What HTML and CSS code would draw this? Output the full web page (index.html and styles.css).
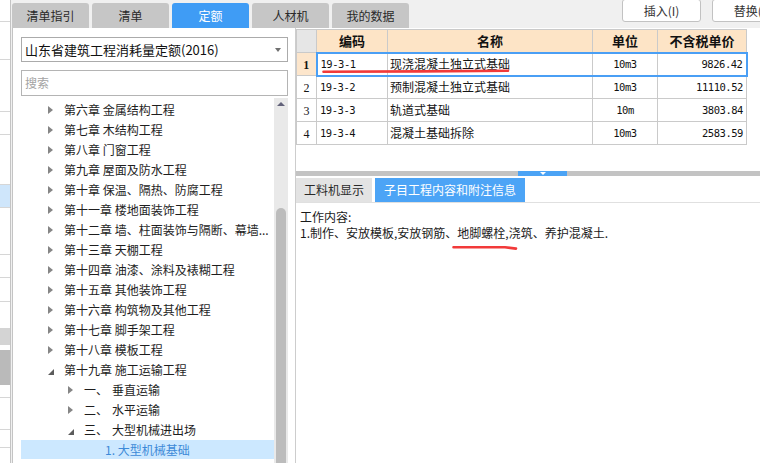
FILE: index.html
```html
<!DOCTYPE html>
<html lang="zh-CN">
<head>
<meta charset="utf-8">
<title>定额</title>
<link rel="stylesheet" href="styles.css">
</head>
<body>
<div class="app">
  <div class="strip">
    <div class="s-row r22"></div>
    <div class="s-row r38"></div>
    <div class="s-row r52"></div>
    <div class="s-row r23"></div>
    <div class="s-row r50"></div>
    <div class="s-row r23 s-sel"></div>
    <div class="s-row r47"></div>
    <div class="s-row r23"></div>
    <div class="s-row r24"></div>
    <div class="s-row r26 nob"></div>
    <div class="s-row r17 s-g1 nob"></div>
    <div class="s-row r5 nob"></div>
    <div class="s-row r35 s-g2 nob"></div>
    <div class="s-row r13"></div>
    <div class="s-row r32"></div>
    <div class="s-row r18"></div>
    <div class="s-row r15 nob"></div>
  </div>
  <div class="main">
    <div class="topbar">
      <div class="tabs">
        <div class="tab">清单指引</div>
        <div class="tab">清单</div>
        <div class="tab active">定额</div>
        <div class="tab">人材机</div>
        <div class="tab">我的数据</div>
      </div>
      <div class="btns">
        <div class="btn">插入(I)</div>
        <div class="btn">替换(I)</div>
      </div>
    </div>
    <div class="content">
      <div class="lpane">
        <div class="select"><span>山东省建筑工程消耗量定额(2016)</span><span class="caret"></span></div>
        <div class="search">搜索</div>
        <div class="treewrap">
          <ul class="tree">
            <li class="node"><span class="arr"></span>第六章 金属结构工程</li>
            <li class="node"><span class="arr"></span>第七章 木结构工程</li>
            <li class="node"><span class="arr"></span>第八章 门窗工程</li>
            <li class="node"><span class="arr"></span>第九章 屋面及防水工程</li>
            <li class="node"><span class="arr"></span>第十章 保温、隔热、防腐工程</li>
            <li class="node"><span class="arr"></span>第十一章 楼地面装饰工程</li>
            <li class="node"><span class="arr"></span>第十二章 墙、柱面装饰与隔断、幕墙...</li>
            <li class="node"><span class="arr"></span>第十三章 天棚工程</li>
            <li class="node"><span class="arr"></span>第十四章 油漆、涂料及裱糊工程</li>
            <li class="node"><span class="arr"></span>第十五章 其他装饰工程</li>
            <li class="node"><span class="arr"></span>第十六章 构筑物及其他工程</li>
            <li class="node"><span class="arr"></span>第十七章 脚手架工程</li>
            <li class="node"><span class="arr"></span>第十八章 模板工程</li>
            <li class="node"><span class="arr open"></span>第十九章 施工运输工程</li>
            <li class="node sub"><span class="arr"></span>一、<span class="gap">垂直运输</span></li>
            <li class="node sub"><span class="arr"></span>二、<span class="gap">水平运输</span></li>
            <li class="node sub"><span class="arr open"></span>三、<span class="gap">大型机械进出场</span></li>
            <li class="node leaf selected">1. 大型机械基础</li>
          </ul>
          <div class="vscroll"><span class="up"></span><div class="thumb"></div></div>
        </div>
      </div>
      <div class="rpane">
        <div class="gridarea">
          <table class="grid">
            <thead>
              <tr><th class="corner"></th><th class="c-code">编码</th><th class="c-name">名称</th><th class="c-unit">单位</th><th class="c-price">不含税单价</th></tr>
            </thead>
            <tbody>
              <tr class="sel"><td class="num cur">1</td><td class="code">19-3-1</td><td class="name">现浇混凝土独立式基础</td><td class="unit">10m3</td><td class="price">9826.42</td></tr>
              <tr><td class="num">2</td><td class="code">19-3-2</td><td class="name">预制混凝土独立式基础</td><td class="unit">10m3</td><td class="price">11110.52</td></tr>
              <tr><td class="num">3</td><td class="code">19-3-3</td><td class="name">轨道式基础</td><td class="unit">10m</td><td class="price">3803.84</td></tr>
              <tr><td class="num">4</td><td class="code">19-3-4</td><td class="name">混凝土基础拆除</td><td class="unit">10m3</td><td class="price">2583.59</td></tr>
            </tbody>
          </table>
        </div>
        <div class="splitter"><span class="grip"><span class="down"></span></span></div>
        <div class="btabs">
          <div class="btab">工料机显示</div>
          <div class="btab active">子目工程内容和附注信息</div>
        </div>
        <div class="detail">
          <p>工作内容:</p>
          <p>1.制作、安放模板,安放钢筋、地脚螺栓,浇筑、养护混凝土.</p>
        </div>
      </div>
    </div>
  </div>
</div>
<svg class="marks" width="760" height="463" viewBox="0 0 760 463">
  <path d="M323.5 71.8 C 380 71.6, 450 71.2, 508 70.8" fill="none" stroke="#f23a3a" stroke-width="2.6" stroke-linecap="round"/>
  <path d="M453.5 247.3 L505 247.3 L516 248.6" fill="none" stroke="#f23a3a" stroke-width="2.6" stroke-linecap="round" stroke-linejoin="round"/>
</svg>
</body>
</html>
```

FILE: styles.css
```css
* { box-sizing: border-box; }
html, body { margin: 0; padding: 0; }
body {
  width: 760px;
  height: 463px;
  overflow: hidden;
  background: #f0f0f0;
  font-family: "Noto Sans CJK SC", "Noto Sans", sans-serif;
  font-size: 12px;
  color: #1e1e1e;
  position: relative;
}
.app { display: flex; height: 463px; }

/* left cut-off strip */
.strip {
  width: 11px;
  flex: none;
  background: #fff;
  border-right: 1px solid #c4c4c4;
  margin-right: 1px;
  overflow: hidden;
}
.s-row { border-bottom: 1px solid #d6d6d6; }
.s-row.nob { border-bottom: none; }
.r5 { height: 5px; } .r13 { height: 13px; } .r15 { height: 15px; } .r17 { height: 17px; }
.r18 { height: 18px; } .r22 { height: 22px; } .r23 { height: 23px; } .r24 { height: 24px; }
.r26 { height: 26px; } .r32 { height: 32px; } .r35 { height: 35px; } .r38 { height: 38px; }
.r47 { height: 47px; } .r50 { height: 50px; } .r52 { height: 52px; }
.s-sel { background: #cfe6fb; }
.s-g1 { background: #d4d4d4; }
.s-g2 { background: #bababa; }

/* main */
.main { flex: 1; display: flex; flex-direction: column; min-width: 0; }
.topbar { height: 28px; display: flex; flex: none; overflow: hidden; }
.tabs { display: flex; gap: 3px; align-items: flex-end; }
.tab {
  width: 77px;
  height: 25px;
  background: #c6c6c6;
  border-radius: 3px 3px 0 0;
  text-align: center;
  line-height: 25px;
  font-size: 12px;
  color: #2a2a2a;
}
.tab.active { background: #3f9cf5; color: #fff; }
.btns { display: flex; gap: 11px; margin-left: 213px; align-items: flex-start; }
.btn {
  flex: none;
  width: 79px;
  height: 23px;
  margin-top: -1px;
  background: #fff;
  border: 1px solid #c2c2c2;
  border-radius: 3px;
  text-align: center;
  line-height: 22px;
  font-size: 12px;
  color: #333;
}

.content { flex: 1; display: flex; min-height: 0; }

/* left pane */
.lpane {
  width: 283px;
  flex: none;
  background: #fff;
  border-left: 1px solid #c4c4c4;
  padding: 9px 7px 0 8px;
  display: flex;
  flex-direction: column;
}
.select {
  height: 25px;
  border: 1px solid #ababab;
  display: flex;
  align-items: center;
  justify-content: space-between;
  padding: 0 6px 0 3px;
  font-size: 13px;
  color: #111;
  line-height: 23px;
}
.caret {
  width: 0; height: 0;
  border-left: 3.5px solid transparent;
  border-right: 3.5px solid transparent;
  border-top: 4px solid #707070;
  margin-top: 1px;
}
.search {
  height: 26px;
  margin-top: 8px;
  border: 1px solid #b4b4b4;
  padding-left: 3px;
  line-height: 24px;
  color: #a3a3a3;
  font-size: 12px;
}
.treewrap { flex: 1; display: flex; margin-top: 2px; min-height: 0; }
.tree {
  flex: 1;
  list-style: none;
  margin: 0;
  padding: 2px 0 0 0;
}
.node {
  height: 20px;
  line-height: 20px;
  display: flex;
  align-items: center;
  padding-left: 27px;
  white-space: nowrap;
  color: #1e1e1e;
}
.node .arr {
  width: 0; height: 0;
  border-top: 4px solid transparent;
  border-bottom: 4px solid transparent;
  border-left: 5px solid #858585;
  margin-right: 11px;
}
.node .arr.open {
  border-top: none;
  border-left: 6px solid transparent;
  border-bottom: 6px solid #5c5c5c;
  margin-top: 3px;
  margin-right: 10px;
}
.node.sub { padding-left: 47px; }
.node .gap { margin-left: 4px; }
.node.leaf { padding-left: 84px; }
.node.selected { background: #cce8ff; color: #3d8ad8; height: 19px; }

.vscroll {
  width: 14px;
  flex: none;
  background: #e9e9e9;
  display: flex;
  flex-direction: column;
  align-items: center;
}
.vscroll .up {
  width: 0; height: 0;
  margin-top: 4px;
  border-left: 4px solid transparent;
  border-right: 4px solid transparent;
  border-bottom: 4px solid #62627a;
}
.vscroll .thumb {
  margin-top: 102px;
  width: 10px;
  flex: 1;
  background: #bcbcbc;
  border-radius: 5px 5px 0 0;
}

/* right pane */
.rpane {
  flex: 1;
  min-width: 0;
  border-left: 1px solid #cdcdcd;
  display: flex;
  flex-direction: column;
  background: #fff;
}
.gridarea { height: 143px; flex: none; padding-top: 1px; background: #fff; }
.grid {
  border-collapse: collapse;
  table-layout: fixed;
  width: 450px;
}
.grid th, .grid td {
  border: 1px solid #cacaca;
  padding: 0;
  white-space: nowrap;
  overflow: hidden;
}
.grid th {
  height: 23px;
  background: #fde4c6;
  font-size: 13px;
  font-weight: bold;
  color: #111;
  text-align: center;
  line-height: 20px;
}
.grid th.corner { background: #e6e6e6; width: 20px; }
.grid th.c-code { width: 71px; }
.grid th.c-name { width: 205px; }
.grid th.c-unit { width: 65px; }
.grid th.c-price { width: 89px; }
.grid td { height: 23px; line-height: 20px; font-size: 12px; color: #141414; }
.grid td.num {
  text-align: center;
  font-family: "Liberation Serif", serif;
  font-size: 12px;
  padding-top: 1px;
}
.grid td.num.cur { background: #fde6cc; font-weight: bold; }
.grid td.code, .grid td.unit, .grid td.price {
  font-family: "DejaVu Sans Mono", monospace;
  font-size: 10.5px;
  letter-spacing: -0.45px;
  color: #111;
}
.grid td.code { padding-left: 3px; }
.grid td.name { padding-left: 2px; }
.grid td.unit { text-align: center; }
.grid td.price { text-align: right; padding-right: 3px; }
.grid tr.sel td:not(.num) { border-top: 2px solid #4a9ff5; border-bottom: 2px solid #4a9ff5; }
.grid tr.sel td.code { border-left: 2px solid #4a9ff5; }
.grid tr.sel td.price { border-right: 2px solid #4a9ff5; }

.splitter {
  height: 5px;
  flex: none;
  background: #c3c3c3;
  display: flex;
}
.grip {
  margin-left: 222px;
  width: 49px;
  height: 5px;
  background: #4ba3f5;
  display: flex;
  justify-content: center;
  align-items: center;
}
.grip .down {
  width: 0; height: 0;
  border-left: 3px solid transparent;
  border-right: 3px solid transparent;
  border-top: 3px solid #fff;
}
.btabs {
  height: 26px;
  flex: none;
  padding-top: 2px;
  display: flex;
  gap: 3px;
  background: #fff;
}
.btab {
  height: 24px;
  line-height: 24px;
  width: 76px;
  text-align: center;
  background: #e3e3e3;
  color: #2a2a2a;
}
.btab.active { width: 150px; background: #4ca4f6; color: #fff; }
.detail {
  flex: 1;
  border-top: 1px solid #e0e0e0;
  padding: 6px 0 0 4px;
  background: #fff;
}
.detail p { margin: 0; line-height: 16px; color: #1a1a1a; }

.marks { position: absolute; left: 0; top: 0; pointer-events: none; }
```
